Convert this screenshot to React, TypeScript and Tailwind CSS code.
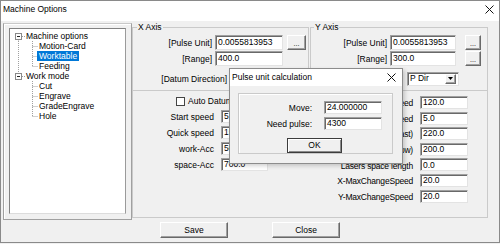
import React from 'react';

const field =
  'bg-white border border-t-[#a0a0a0] border-l-[#a0a0a0] border-b-[#e3e3e3] border-r-[#e3e3e3] shadow-[inset_1px_1px_0_#696969] pl-[2px] whitespace-nowrap overflow-hidden flex items-center';
const btn =
  'bg-[#f0f0f0] border border-t-white border-l-white border-b-[#696969] border-r-[#696969] shadow-[inset_-1px_-1px_0_#a0a0a0] flex items-center justify-center';

const CloseX = ({ className }: { className: string }) => (
  <svg width="9" height="9" viewBox="0 0 9 9" className={className}>
    <path d="M0.5 0.5 L8.5 8.5 M8.5 0.5 L0.5 8.5" stroke="#111" strokeWidth="1" />
  </svg>
);

const LINE = '#a0a0a0';

const RootRow = ({ label, above, below }: { label: string; above?: boolean; below?: boolean }) => (
  <div className="flex h-[10px] items-center">
    <svg width="16" height="10" className="shrink-0">
      {above && <line x1="8.5" y1="0" x2="8.5" y2="2.5" stroke={LINE} strokeDasharray="1 1" />}
      {below && <line x1="8.5" y1="8.5" x2="8.5" y2="10" stroke={LINE} strokeDasharray="1 1" />}
      <line x1="12" y1="5.5" x2="16" y2="5.5" stroke={LINE} strokeDasharray="1 1" />
      <rect x="5.5" y="2.5" width="6" height="6" fill="white" stroke="#8a8a8a" />
      <line x1="7" y1="5.5" x2="10" y2="5.5" stroke="#222" />
    </svg>
    <span>{label}</span>
  </div>
);

const ChildRow = ({
  label,
  rootLine,
  last,
  selected,
}: {
  label: string;
  rootLine?: boolean;
  last?: boolean;
  selected?: boolean;
}) => (
  <div className="flex h-[10px] items-center">
    <svg width="29" height="10" className="shrink-0">
      {rootLine && <line x1="8.5" y1="0" x2="8.5" y2="10" stroke={LINE} strokeDasharray="1 1" />}
      <line x1="22.5" y1="0" x2="22.5" y2={last ? 5.5 : 10} stroke={LINE} strokeDasharray="1 1" />
      <line x1="22.5" y1="5.5" x2="28" y2="5.5" stroke={LINE} strokeDasharray="1 1" />
    </svg>
    {selected ? (
      <span className="-ml-[2px] px-[2px] h-[10px] leading-[10px] bg-[#0078d7] text-white">{label}</span>
    ) : (
      <span>{label}</span>
    )}
  </div>
);

const Combo = ({ w, text }: { w: string; text: string }) => (
  <div className={`${w} h-[14px] ${field} justify-between pr-[2px]`}>
    <span>{text}</span>
    <div className={`w-[11px] h-[10px] ${btn}`}>
      <svg width="5" height="3" viewBox="0 0 5 3">
        <path d="M0 0 L5 0 L2.5 3 Z" fill="#000" />
      </svg>
    </div>
  </div>
);

const leftRows = [
  { label: 'Start speed', value: '5.0' },
  { label: 'Quick speed', value: '150.0' },
  { label: 'work-Acc', value: '500.0' },
  { label: 'space-Acc', value: '700.0' },
];

const rightRows = [
  { label: 'Max speed', value: '120.0' },
  { label: 'Min speed', value: '5.0' },
  { label: 'Acc(fast)', value: '220.0' },
  { label: 'Acc(slow)', value: '200.0' },
  { label: 'Lasers space length', value: '0.0' },
  { label: 'X-MaxChangeSpeed', value: '20.0' },
  { label: 'Y-MaxChangeSpeed', value: '20.0' },
];

export default function App() {
  return (
    <div className="w-[500px] h-[244px] bg-[#f0f0f0] font-['Liberation_Sans',Arial,sans-serif] text-[8.5px] text-black leading-none">
      <div className="relative w-[500px] h-[243px] border border-[#8a8a8a] flex flex-col">
        {/* title bar */}
        <div className="h-[20px] shrink-0 bg-white flex items-start justify-between pl-[2px] pr-[5px] pt-[3px]">
          <span className="leading-[10px]">Machine Options</span>
          <CloseX className="mt-[1px]" />
        </div>

        <div className="flex pl-[2px]">
          {/* tree panel */}
          <div className="mt-[2px] w-[129px] h-[197px] shrink-0 border border-t-[#c8c8c8] border-l-[#a0a0a0] border-b-[#a0a0a0] border-r-[#a0a0a0] shadow-[inset_1px_1px_0_#fff] pl-[5px] pt-[4px]">
            <div className="w-[117px] h-[186px] bg-white border border-t-[#828282] border-l-[#828282] border-b-[#dcdcdc] border-r-[#9a9a9a] pt-[2px]">
              <RootRow label="Machine options" below />
              <ChildRow label="Motion-Card" rootLine />
              <ChildRow label="Worktable" rootLine selected />
              <ChildRow label="Feeding" rootLine last />
              <RootRow label="Work mode" above />
              <ChildRow label="Cut" />
              <ChildRow label="Engrave" />
              <ChildRow label="GradeEngrave" />
              <ChildRow label="Hole" last />
            </div>
          </div>

          {/* settings */}
          <div className="mt-[6px] flex flex-col">
            <div className="flex gap-[1px]">
              {/* X Axis */}
              <div className="w-[177px] h-[63px] border-t border-l border-r border-[#cacaca]">
                <div className="-mt-[6px] ml-[4px] w-fit px-[1px] h-[10px] leading-[10px] bg-[#f0f0f0]">X Axis</div>
                <div className="mt-[3px] flex items-center h-[15px]">
                  <span className="w-[79px] pt-[2px] text-right">[Pulse Unit]</span>
                  <div className={`ml-[3px] w-[68px] h-[15px] ${field}`}>0.0055813953</div>
                  <div className={`ml-[4px] w-[19px] h-[15px] ${btn} text-[7px] items-end pb-[2px]`}>...</div>
                </div>
                <div className="mt-[1px] flex items-center h-[15px]">
                  <span className="w-[79px] pt-[2px] text-right">[Range]</span>
                  <div className={`ml-[3px] w-[68px] h-[15px] ${field}`}>400.0</div>
                </div>
                <div className="mt-[5px] flex items-center h-[15px]">
                  <span className="w-[94px] pt-[2px] text-right">[Datum Direction]</span>
                </div>
              </div>

              {/* Y Axis */}
              <div className="w-[178px] h-[63px] border-t border-l border-r border-[#cacaca]">
                <div className="-mt-[6px] ml-[3px] w-fit px-[1px] h-[10px] leading-[10px] bg-[#f0f0f0]">Y Axis</div>
                <div className="mt-[3px] flex items-center h-[15px]">
                  <span className="w-[76px] pt-[2px] text-right">[Pulse Unit]</span>
                  <div className={`ml-[3px] w-[66px] h-[15px] ${field}`}>0.0055813953</div>
                  <div className={`ml-[9px] w-[16px] h-[15px] ${btn} text-[7px] items-end pb-[2px]`}>...</div>
                </div>
                <div className="mt-[1px] flex items-center h-[15px]">
                  <span className="w-[76px] pt-[2px] text-right">[Range]</span>
                  <div className={`ml-[3px] w-[66px] h-[15px] ${field}`}>300.0</div>
                  <div className={`ml-[9px] w-[16px] h-[15px] ${btn} text-[7px] items-end pb-[2px]`}>...</div>
                </div>
                <div className="mt-[5px] flex items-center h-[15px]">
                  <div className="ml-[96px]">
                    <Combo w="w-[52px]" text="P Dir" />
                  </div>
                </div>
              </div>
            </div>

            {/* speeds */}
            <div className="w-[356px] h-[128px] border border-[#cacaca] flex">
              <div className="w-[167px] pt-[3px] flex flex-col">
                <div className="h-[14px] mb-[2px] flex items-center pl-[43px]">
                  <div className="w-[9px] h-[9px] bg-white border border-[#444]" />
                  <span className="ml-[3px]">Auto Datum</span>
                </div>
                {leftRows.map((r) => (
                  <div key={r.label} className="h-[13px] mb-[3px] flex items-center">
                    <span className="w-[81px] pt-[2px] text-right">{r.label}</span>
                    <div className={`ml-[7px] w-[47px] h-[13px] ${field}`}>{r.value}</div>
                  </div>
                ))}
              </div>
              <div className="pt-[5px] flex flex-col gap-[2.6px]">
                {rightRows.map((r) => (
                  <div key={r.label} className="h-[13px] flex items-center">
                    <span className="w-[113px] pt-[2px] text-right whitespace-nowrap tracking-[-0.2px]">{r.label}</span>
                    <div className={`ml-[7px] w-[48px] h-[13px] ${field}`}>{r.value}</div>
                  </div>
                ))}
              </div>
            </div>
          </div>
        </div>

        {/* bottom buttons */}
        <div className="mt-[2px] ml-[159px] flex">
          <div className={`w-[68px] h-[16px] ${btn}`}>Save</div>
          <div className={`ml-[44px] w-[68px] h-[16px] ${btn}`}>Close</div>
        </div>

        {/* Pulse unit calculation dialog */}
        <div className="absolute left-[228px] top-[67px] w-[174px] h-[96px] border border-[#8c8c8c] bg-[#f0f0f0] shadow-[2px_2px_4px_rgba(0,0,0,0.18)] flex flex-col">
          <div className="h-[17px] shrink-0 bg-white flex items-center justify-between pl-[2px] pr-[6px]">
            <span>Pulse unit calculation</span>
            <CloseX className="" />
          </div>
          <div className="ml-[8px] mt-[7px] w-[155px] h-[61px] border border-[#cacaca] shadow-[inset_1px_1px_0_#fff]">
            <div className="mt-[7px] flex items-center h-[13px]">
              <span className="w-[73px] pt-[2px] text-right">Move:</span>
              <div className={`ml-[12px] w-[58px] h-[13px] ${field}`}>24.000000</div>
            </div>
            <div className="mt-[3px] flex items-center h-[13px]">
              <span className="w-[73px] pt-[2px] text-right">Need pulse:</span>
              <div className={`ml-[12px] w-[58px] h-[13px] ${field}`}>4300</div>
            </div>
            <div className="mt-[8px] ml-[48px] w-[55px] h-[15px] bg-[#f0f0f0] border border-[#3c3c3c] shadow-[inset_1px_1px_0_#fff,inset_-1px_-1px_0_#8a8a8a] flex items-center justify-center">
              OK
            </div>
          </div>
        </div>
      </div>
    </div>
  );
}
